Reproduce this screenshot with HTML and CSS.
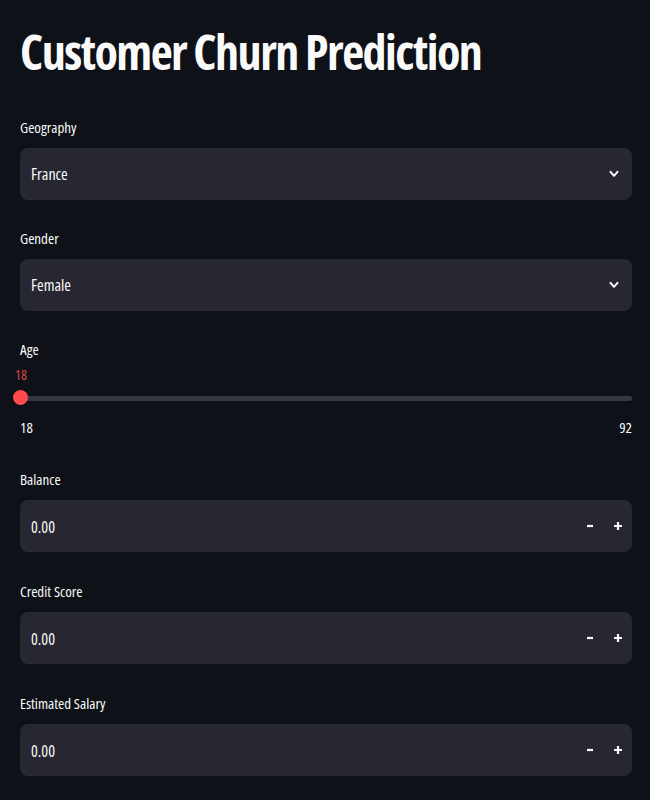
FILE: index.html
```html
<!DOCTYPE html>
<html lang="en">
<head>
    <meta charset="UTF-8">
    <meta name="viewport" content="width=device-width, initial-scale=1">
    <title>Customer Churn Prediction</title>
    <link rel="stylesheet" href="styles.css">
</head>
<body>
<div class="page">
    <h1>Customer Churn Prediction</h1>

    <div class="field">
        <div class="label">Geography</div>
        <div class="control select">
            <span class="value">France</span>
            <svg class="chevron" width="10" height="8" viewBox="0 0 10 8">
                <path d="M1.5 1.8 L5 5.8 L8.5 1.8" fill="none" stroke="#fafafa" stroke-width="2" stroke-linecap="round" stroke-linejoin="round"/>
            </svg>
        </div>
    </div>

    <div class="field">
        <div class="label">Gender</div>
        <div class="control select">
            <span class="value">Female</span>
            <svg class="chevron" width="10" height="8" viewBox="0 0 10 8">
                <path d="M1.5 1.8 L5 5.8 L8.5 1.8" fill="none" stroke="#fafafa" stroke-width="2" stroke-linecap="round" stroke-linejoin="round"/>
            </svg>
        </div>
    </div>

    <div class="field slider-field">
        <div class="label">Age</div>
        <div class="slider-value">18</div>
        <div class="slider">
            <div class="track"></div>
            <div class="thumb"></div>
        </div>
        <div class="ticks">
            <span>18</span>
            <span>92</span>
        </div>
    </div>

    <div class="field number-field">
        <div class="label">Balance</div>
        <div class="control number">
            <span class="value">0.00</span>
            <div class="steps">
                <button class="step"><svg width="10" height="10" viewBox="0 0 10 10"><path d="M2 5 H8" stroke="#fafafa" stroke-width="2.2"/></svg></button>
                <button class="step"><svg width="10" height="10" viewBox="0 0 10 10"><path d="M1 5 H9 M5 1 V9" stroke="#fafafa" stroke-width="2.2"/></svg></button>
            </div>
        </div>
    </div>

    <div class="field number-field">
        <div class="label">Credit Score</div>
        <div class="control number">
            <span class="value">0.00</span>
            <div class="steps">
                <button class="step"><svg width="10" height="10" viewBox="0 0 10 10"><path d="M2 5 H8" stroke="#fafafa" stroke-width="2.2"/></svg></button>
                <button class="step"><svg width="10" height="10" viewBox="0 0 10 10"><path d="M1 5 H9 M5 1 V9" stroke="#fafafa" stroke-width="2.2"/></svg></button>
            </div>
        </div>
    </div>

    <div class="field number-field">
        <div class="label">Estimated Salary</div>
        <div class="control number">
            <span class="value">0.00</span>
            <div class="steps">
                <button class="step"><svg width="10" height="10" viewBox="0 0 10 10"><path d="M2 5 H8" stroke="#fafafa" stroke-width="2.2"/></svg></button>
                <button class="step"><svg width="10" height="10" viewBox="0 0 10 10"><path d="M1 5 H9 M5 1 V9" stroke="#fafafa" stroke-width="2.2"/></svg></button>
            </div>
        </div>
    </div>
</div>
</body>
</html>
```
FILE: styles.css
```css
body {
    margin: 0;
    background: #0e1117;
    color: #fafafa;
    font-family: "Open Sans", "Noto Sans", sans-serif;
    font-stretch: 75%;
}

.page {
    padding: 20px 18px 0 20px;
}

h1 {
    margin: 0 0 33px 0;
    font-size: 48px;
    font-weight: 700;
    line-height: 64px;
    letter-spacing: -1.5px;
}

.field {
    margin-bottom: 28px;
}

.number-field {
    margin-bottom: 29px;
}

.label {
    font-size: 15px;
    line-height: 20px;
    margin-bottom: 11px;
}

.control {
    height: 52px;
    background: #262730;
    border-radius: 8px;
    display: flex;
    align-items: center;
    justify-content: space-between;
    padding-left: 11px;
    box-sizing: border-box;
}

.value {
    font-size: 16px;
}

.number .value {
    margin-top: 2px;
}

.select {
    padding-right: 13px;
}

.chevron {
    display: block;
}

.steps {
    display: flex;
    height: 100%;
}

.step {
    width: 28px;
    height: 100%;
    padding: 0;
    border: none;
    background: transparent;
    display: flex;
    align-items: center;
    justify-content: center;
}

/* slider */
.slider-field {
    margin-bottom: 32px;
}

.slider-field .label {
    margin-bottom: 6px;
}

.slider-value {
    width: 20px;
    margin-left: -9px;
    text-align: center;
    font-size: 14px;
    line-height: 20px;
    color: #dc4a4e;
}

.slider {
    position: relative;
    height: 20px;
    margin-top: 3px;
    display: flex;
    align-items: center;
}

.track {
    flex: 1;
    height: 5px;
    border-radius: 3px;
    background: #363841;
}

.thumb {
    position: absolute;
    left: -7px;
    top: 2px;
    width: 15px;
    height: 15px;
    border-radius: 50%;
    background: #ff4b4b;
}

.ticks {
    display: flex;
    justify-content: space-between;
    margin-top: 9px;
    font-size: 15px;
    line-height: 20px;
}
```
